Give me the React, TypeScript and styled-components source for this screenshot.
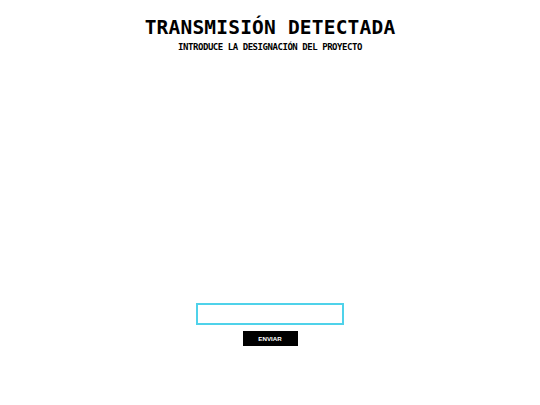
import React, { useState } from 'react';
import styled, { createGlobalStyle } from 'styled-components';

const GlobalStyle = createGlobalStyle`
  html, body {
    margin: 0;
    padding: 0;
    background: #ffffff;
  }
`;

const Page = styled.div`
  height: 405px;
  display: flex;
  flex-direction: column;
  align-items: center;
  font-family: 'DejaVu Sans Mono', monospace;
  color: #000;
`;

const Header = styled.header`
  display: flex;
  flex-direction: column;
  align-items: center;
  padding-top: 17px;
`;

const Title = styled.h1`
  margin: 0;
  font-size: 19.5px;
  line-height: 22px;
  font-weight: bold;
  letter-spacing: 0.2px;
`;

const Subtitle = styled.h2`
  margin: 2.5px 0 0;
  font-size: 9px;
  line-height: 10px;
  font-weight: bold;
  letter-spacing: -0.45px;
`;

const Form = styled.form`
  margin-top: auto;
  margin-bottom: 59px;
  display: flex;
  flex-direction: column;
  align-items: center;
  gap: 6px;
`;

const Input = styled.input`
  box-sizing: border-box;
  width: 148px;
  height: 22px;
  border: 2px solid #4fd2ea;
  outline: none;
  background: #fff;
  padding: 0 4px;
  font-family: 'DejaVu Sans Mono', monospace;
`;

const Button = styled.button`
  box-sizing: border-box;
  width: 55px;
  height: 15px;
  border: none;
  background: #000;
  color: #fff;
  font-family: 'Liberation Sans', Arial, sans-serif;
  font-weight: bold;
  font-size: 6.2px;
  padding: 0;
  cursor: pointer;
`;

export default function App() {
  const [value, setValue] = useState('');
  return (
    <>
      <GlobalStyle />
      <Page>
        <Header>
          <Title>TRANSMISIÓN DETECTADA</Title>
          <Subtitle>INTRODUCE LA DESIGNACIÓN DEL PROYECTO</Subtitle>
        </Header>
        <Form onSubmit={(e) => e.preventDefault()}>
          <Input value={value} onChange={(e) => setValue(e.target.value)} />
          <Button type="submit">ENVIAR</Button>
        </Form>
      </Page>
    </>
  );
}
